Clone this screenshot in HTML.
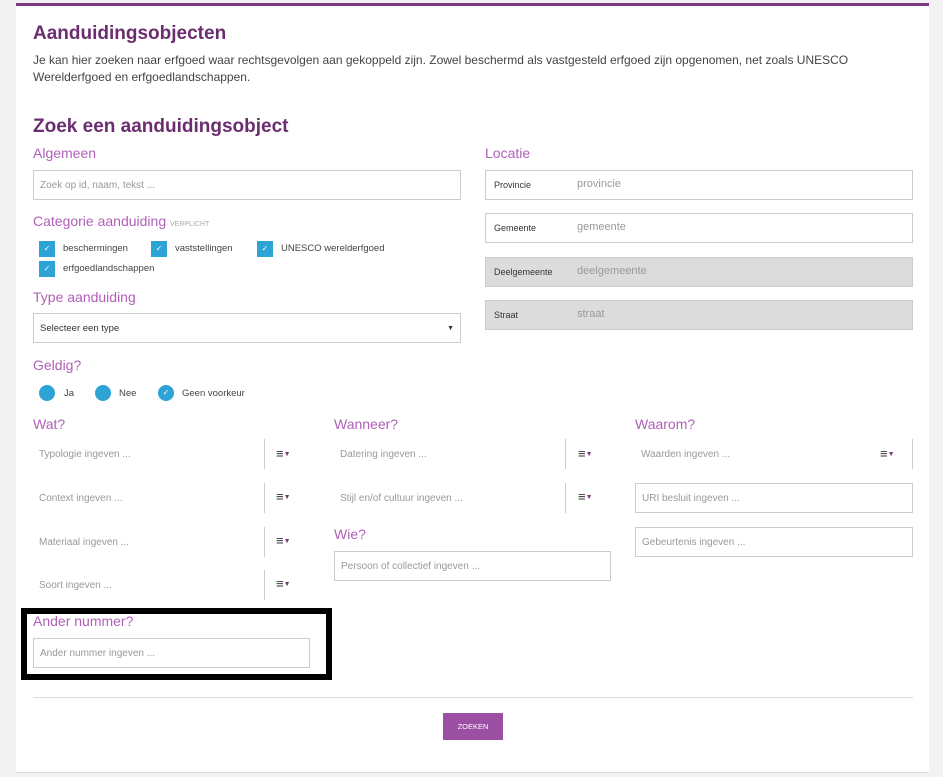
<!DOCTYPE html>
<html><head><meta charset="utf-8"><style>
*{box-sizing:border-box;margin:0;padding:0}
body{width:943px;height:777px;background:#f2f2f2;font-family:"Liberation Sans",sans-serif;position:relative;overflow:hidden}
.card{position:absolute;left:16px;top:3px;width:913px;height:770px;background:#fff;border-top:3px solid #7a3a7f;border-bottom:1px solid #ddd}
.a{position:absolute}
h1{position:absolute;font-size:19px;color:#6b2d6f;font-weight:bold}
.p{font-size:12px;color:#444;line-height:17px}
.lbl{position:absolute;font-size:14px;color:#b060b8}
.in{position:absolute;border:1px solid #ccc;height:30px;font-size:10px;color:#999;padding-left:6px;line-height:30px;background:#fff}
.cb{position:absolute;width:16px;height:16px;background:#2ea3d5;color:#fff;font-size:8px;text-align:center;line-height:16px}
.t{position:absolute;font-size:9.5px;color:#444}
.rd{position:absolute;width:16px;height:16px;border-radius:50%;background:#2ea3d5;color:#fff;font-size:8px;text-align:center;line-height:16px}
.ti{position:absolute;height:30px;font-size:10px;color:#999;padding-left:6px;line-height:32px}
.sep{position:absolute;width:1px;height:30px;background:#ccc}
.ic{position:absolute;font-size:13px;font-weight:bold;color:#333;line-height:13px}
.ic b{color:#7a3a7f;font-size:7px;font-weight:normal;vertical-align:2px}
.loc{position:absolute;left:485px;width:428px;height:30px;border:1px solid #ccc;background:#fff}
.loc span{position:absolute;left:8px;top:9px;font-size:9px;color:#333}
.loc i{position:absolute;left:91px;top:7px;font-size:11px;color:#999;font-style:normal}
.gr{background:#dcdcdc}
</style></head><body>
<div class="card"></div>
<h1 style="left:33px;top:23px">Aanduidingsobjecten</h1>
<div class="a p" style="left:33px;top:52px;width:860px">Je kan hier zoeken naar erfgoed waar rechtsgevolgen aan gekoppeld zijn. Zowel beschermd als vastgesteld erfgoed zijn opgenomen, net zoals UNESCO Werelderfgoed en erfgoedlandschappen.</div>
<h1 style="left:33px;top:116px">Zoek een aanduidingsobject</h1>
<div class="lbl" style="left:33px;top:145px">Algemeen</div>
<div class="in" style="left:33px;top:170px;width:428px">Zoek op id, naam, tekst ...</div>
<div class="lbl" style="left:33px;top:213px">Categorie aanduiding <span style="font-size:7px;color:#aaa">VERPLICHT</span></div>
<div class="cb" style="left:39px;top:241px">✓</div><div class="t" style="left:63px;top:243px">beschermingen</div>
<div class="cb" style="left:151px;top:241px">✓</div><div class="t" style="left:175px;top:243px">vaststellingen</div>
<div class="cb" style="left:257px;top:241px">✓</div><div class="t" style="left:281px;top:243px">UNESCO werelderfgoed</div>
<div class="cb" style="left:39px;top:261px">✓</div><div class="t" style="left:63px;top:263px">erfgoedlandschappen</div>
<div class="lbl" style="left:33px;top:289px">Type aanduiding</div>
<div class="in" style="left:33px;top:313px;width:428px;color:#333;font-size:9.5px">Selecteer een type<span style="position:absolute;right:6px;font-size:7px">▼</span></div>
<div class="lbl" style="left:485px;top:145px">Locatie</div>
<div class="loc" style="top:170px"><span>Provincie</span><i>provincie</i></div>
<div class="loc" style="top:213px"><span>Gemeente</span><i>gemeente</i></div>
<div class="loc gr" style="top:257px"><span>Deelgemeente</span><i>deelgemeente</i></div>
<div class="loc gr" style="top:300px"><span>Straat</span><i>straat</i></div>
<div class="lbl" style="left:33px;top:357px">Geldig?</div>
<div class="rd" style="left:39px;top:385px"></div><div class="t" style="left:64px;top:388px">Ja</div>
<div class="rd" style="left:95px;top:385px"></div><div class="t" style="left:119px;top:388px">Nee</div>
<div class="rd" style="left:158px;top:385px">✓</div><div class="t" style="left:182px;top:388px">Geen voorkeur</div>
<div class="lbl" style="left:33px;top:416px">Wat?</div>
<div class="lbl" style="left:334px;top:416px">Wanneer?</div>
<div class="lbl" style="left:635px;top:416px">Waarom?</div>
<div class="ti" style="left:33px;top:439px">Typologie ingeven ...</div><div class="sep" style="left:264px;top:439px"></div><div class="ic" style="left:276px;top:447px">≡<b>▼</b></div>
<div class="ti" style="left:33px;top:483px">Context ingeven ...</div><div class="sep" style="left:264px;top:483px"></div><div class="ic" style="left:276px;top:490px">≡<b>▼</b></div>
<div class="ti" style="left:33px;top:527px">Materiaal ingeven ...</div><div class="sep" style="left:264px;top:527px"></div><div class="ic" style="left:276px;top:534px">≡<b>▼</b></div>
<div class="ti" style="left:33px;top:570px">Soort ingeven ...</div><div class="sep" style="left:264px;top:570px"></div><div class="ic" style="left:276px;top:577px">≡<b>▼</b></div>
<div class="ti" style="left:334px;top:439px">Datering ingeven ...</div><div class="sep" style="left:565px;top:439px"></div><div class="ic" style="left:578px;top:447px">≡<b>▼</b></div>
<div class="ti" style="left:334px;top:483px">Stijl en/of cultuur ingeven ...</div><div class="sep" style="left:565px;top:483px"></div><div class="ic" style="left:578px;top:490px">≡<b>▼</b></div>
<div class="lbl" style="left:334px;top:526px">Wie?</div>
<div class="in" style="left:334px;top:551px;width:277px">Persoon of collectief ingeven ...</div>
<div class="ti" style="left:635px;top:439px">Waarden ingeven ...</div><div class="sep" style="left:912px;top:439px"></div><div class="ic" style="left:880px;top:447px">≡<b>▼</b></div>
<div class="in" style="left:635px;top:483px;width:278px">URI besluit ingeven ...</div>
<div class="in" style="left:635px;top:527px;width:278px">Gebeurtenis ingeven ...</div>
<div class="a" style="left:21px;top:608px;width:311px;height:72px;border:6px solid #000"></div>
<div class="lbl" style="left:33px;top:613px">Ander nummer?</div>
<div class="in" style="left:33px;top:638px;width:277px">Ander nummer ingeven ...</div>
<div class="a" style="left:33px;top:697px;width:880px;height:1px;background:#ddd"></div>
<div class="a" style="left:443px;top:713px;width:60px;height:27px;background:#9b4fa3;color:#fff;font-size:7.5px;text-align:center;line-height:27px">ZOEKEN</div>
</body></html>
